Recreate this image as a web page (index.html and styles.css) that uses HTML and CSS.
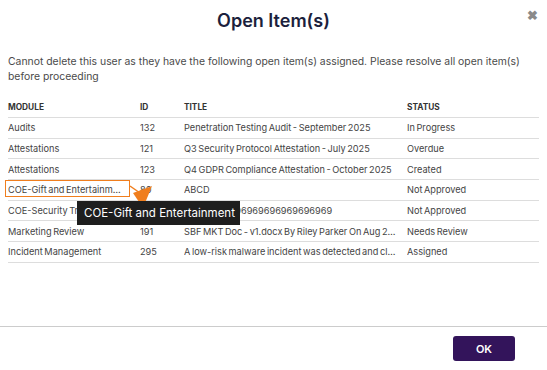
FILE: index.html
```html
<!DOCTYPE html>
<html>
<head>
<meta charset="utf-8">
<link rel="stylesheet" href="styles.css">
</head>
<body>
<div class="modal">
  <div class="header">
    <h1 class="title">Open Item(s)</h1>
    <span class="close">&#10006;</span>
  </div>
  <div class="body">
    <p class="message">Cannot delete this user as they have the following open item(s) assigned. Please resolve all open item(s) before proceeding</p>
    <div class="table-wrap">
      <table class="items">
        <colgroup>
          <col class="c-module"><col class="c-id"><col class="c-title"><col class="c-status">
        </colgroup>
        <thead>
          <tr><th>MODULE</th><th>ID</th><th>TITLE</th><th>STATUS</th></tr>
        </thead>
        <tbody>
          <tr><td>Audits</td><td>132</td><td>Penetration Testing Audit - September 2025</td><td>In Progress</td></tr>
          <tr><td>Attestations</td><td>121</td><td>Q3 Security Protocol Attestation - July 2025</td><td>Overdue</td></tr>
          <tr><td>Attestations</td><td>123</td><td>Q4 GDPR Compliance Attestation - October 2025</td><td>Created</td></tr>
          <tr><td>COE-Gift and Entertainment</td><td>80</td><td>ABCD</td><td>Not Approved</td></tr>
          <tr><td>COE-Security Training</td><td>86</td><td>69696969696969696969696969</td><td>Not Approved</td></tr>
          <tr><td>Marketing Review</td><td>191</td><td>SBF MKT Doc - v1.docx By Riley Parker On Aug 21 2025</td><td>Needs Review</td></tr>
          <tr><td>Incident Management</td><td>295</td><td>A low-risk malware incident was detected and cleaned</td><td>Assigned</td></tr>
        </tbody>
      </table>
      <div class="highlight"></div>
      <svg class="arrow" width="26" height="26" viewBox="0 0 26 26">
        <line x1="1" y1="1" x2="11" y2="8" stroke="#f07e1e" stroke-width="1.5"/>
        <polygon points="4,8 23,1 14,23" fill="#f07e1e"/>
      </svg>
      <div class="tooltip">COE-Gift and Entertainment</div>
    </div>
  </div>
  <div class="footer">
    <button class="ok">OK</button>
  </div>
</div>
</body>
</html>
```
FILE: styles.css
```css
* { box-sizing: border-box; }
html, body { margin: 0; padding: 0; background: #fff; }
body { font-family: Inter, "Noto Sans", sans-serif; color: #444; }
.modal { width: 547px; height: 370px; display: flex; flex-direction: column; }
.header { position: relative; height: 40px; display: flex; justify-content: center; align-items: center; }
.title { margin: 0; font-size: 18px; font-weight: 600; color: #1c1f3d; }
.close { position: absolute; right: 9px; top: 7px; font-size: 13px; color: #8a8a8a; font-weight: bold; }
.body { flex: 1; padding: 0 8px; }
.message { margin: 14px 0 0; font-size: 10.4px; line-height: 15px; color: #4a4a4a; }
.table-wrap { position: relative; margin-top: 13px; }
.items { width: 531px; border-collapse: collapse; table-layout: fixed; font-size: 9.2px; word-spacing: -1px; }
.c-module { width: 132px; }
.c-id { width: 44px; }
.c-title { width: 223px; }
.c-status { width: 132px; }
.items th { text-align: left; font-weight: 700; font-size: 8.3px; color: #333; height: 20.5px; padding: 0; border-bottom: 1px solid #ddd; word-spacing: 0; }
.items td { height: 20.7px; padding: 0 11px 0 0; border-bottom: 1px solid #ddd; white-space: nowrap; overflow: hidden; text-overflow: ellipsis; color: #444; }
.items td:first-child { padding-right: 14px; }
.highlight { position: absolute; left: -3px; top: 83px; width: 125px; height: 17px; border: 1.5px solid #f07e1e; }
.arrow { position: absolute; left: 121px; top: 88px; }
.tooltip { position: absolute; left: 69px; top: 104px; width: 163px; height: 24px; background: #1e1e1e; color: #fff; font-size: 11.5px; line-height: 24px; padding-left: 7px; }
.footer { border-top: 1px solid #ccc; height: 44px; display: flex; justify-content: flex-end; align-items: center; padding-right: 32px; }
.ok { width: 62px; height: 25px; background: #33145b; color: #fff; border: none; border-radius: 3px; font-family: Inter, sans-serif; font-size: 11px; font-weight: 600; }
```
